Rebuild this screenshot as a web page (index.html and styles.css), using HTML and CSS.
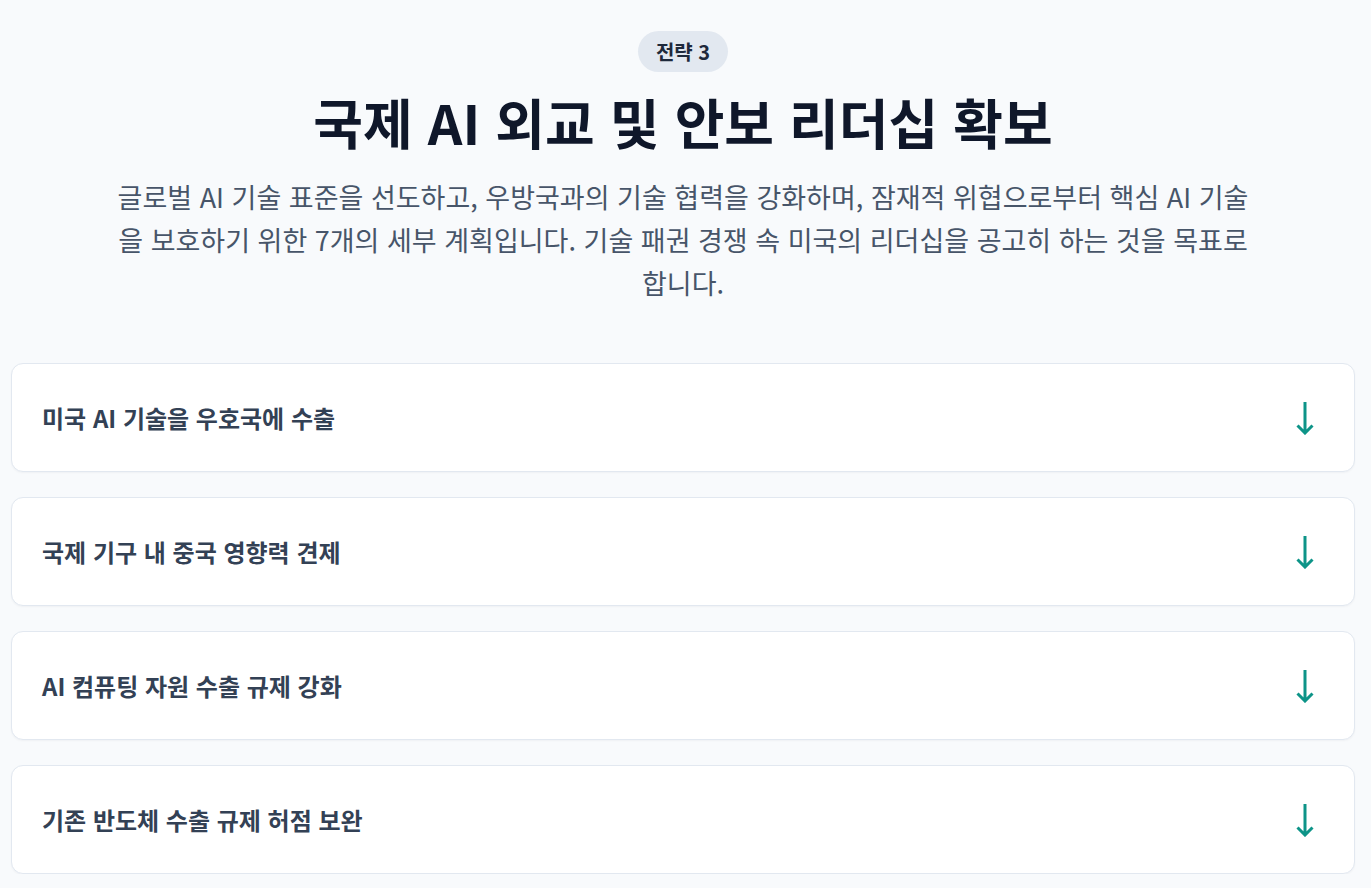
FILE: index.html
```html
<!DOCTYPE html>
<html lang="ko">
<head>
<meta charset="utf-8">
<link rel="stylesheet" href="styles.css">
</head>
<body>
<main class="page">
  <header class="intro">
    <span class="badge">전략 3</span>
    <h1 class="title">국제 AI 외교 및 안보 리더십 확보</h1>
    <p class="desc">글로벌 AI 기술 표준을 선도하고, 우방국과의 기술 협력을 강화하며, 잠재적 위협으로부터 핵심 AI 기술을 보호하기 위한 7개의 세부 계획입니다. 기술 패권 경쟁 속 미국의 리더십을 공고히 하는 것을 목표로 합니다.</p>
  </header>
  <section class="list">
    <div class="card"><span class="card-title">미국 AI 기술을 우호국에 수출</span><svg class="arrow" width="18" height="34" viewBox="0 0 18 34"><path d="M9 1V32M1.5 24.5L9 32L16.5 24.5"/></svg></div>
    <div class="card"><span class="card-title">국제 기구 내 중국 영향력 견제</span><svg class="arrow" width="18" height="34" viewBox="0 0 18 34"><path d="M9 1V32M1.5 24.5L9 32L16.5 24.5"/></svg></div>
    <div class="card"><span class="card-title">AI 컴퓨팅 자원 수출 규제 강화</span><svg class="arrow" width="18" height="34" viewBox="0 0 18 34"><path d="M9 1V32M1.5 24.5L9 32L16.5 24.5"/></svg></div>
    <div class="card"><span class="card-title">기존 반도체 수출 규제 허점 보완</span><svg class="arrow" width="18" height="34" viewBox="0 0 18 34"><path d="M9 1V32M1.5 24.5L9 32L16.5 24.5"/></svg></div>
  </section>
</main>
</body>
</html>
```
FILE: styles.css
```css
* { box-sizing: border-box; }
html, body { margin: 0; padding: 0; }
body {
  background: #f8fafc;
  font-family: "Noto Sans CJK KR", "Noto Sans", sans-serif;
  color: #0f172a;
}
.page {
  padding: 31px 16px 0 11px;
}
.intro {
  display: flex;
  flex-direction: column;
  align-items: center;
  text-align: center;
}
.badge {
  display: inline-block;
  background: #e2e8f0;
  color: #1e293b;
  font-weight: 700;
  font-size: 20px;
  line-height: 25px;
  padding: 8px 18px;
  border-radius: 999px;
}
.title {
  margin: 16px 0 0;
  font-size: 54px;
  font-weight: 700;
  line-height: 68px;
  color: #0f172a;
}
.desc {
  margin: 19px 0 0;
  max-width: 1150px;
  font-size: 27px;
  line-height: 43px;
  color: #475569;
}
.list {
  margin-top: 59px;
  display: flex;
  flex-direction: column;
  gap: 25px;
}
.card {
  display: flex;
  align-items: center;
  justify-content: space-between;
  height: 109px;
  padding: 0 40px 0 30px;
  background: #ffffff;
  border: 1px solid #e2e8f0;
  border-radius: 12px;
  box-shadow: 0 1px 2px rgba(15, 23, 42, 0.04);
}
.card-title {
  font-size: 24px;
  font-weight: 700;
  color: #334155;
}
.arrow {
  flex: none;
  fill: none;
  stroke: #0d9488;
  stroke-width: 3;
}
```
